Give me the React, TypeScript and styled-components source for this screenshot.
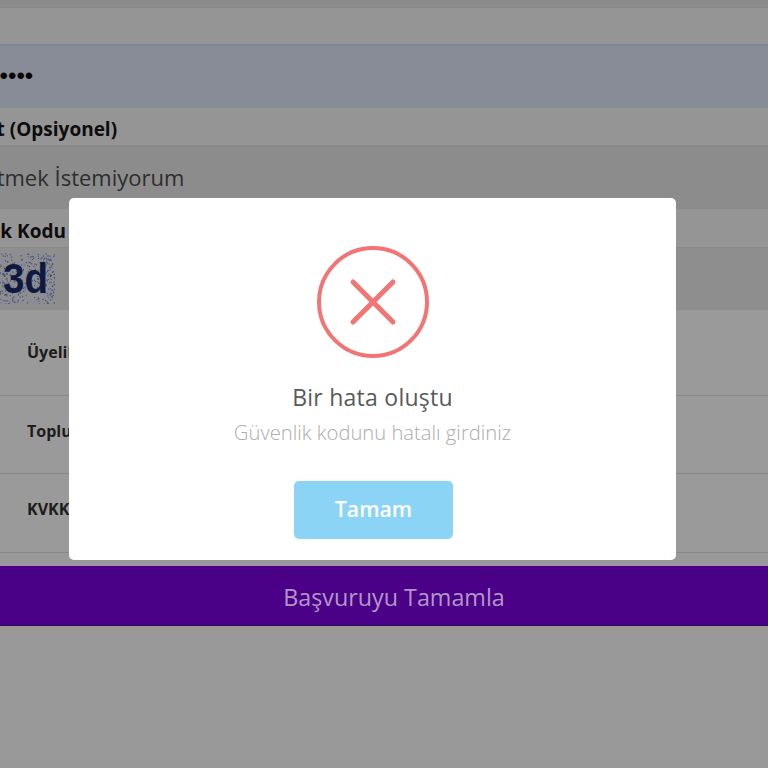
import React, { useMemo } from "react";
import styled, { createGlobalStyle } from "styled-components";

const Global = createGlobalStyle`
  html, body { margin: 0; padding: 0; width: 768px; height: 768px; overflow: hidden; background: #999999; }
  body { font-family: "Open Sans", "Noto Sans", sans-serif; }
`;

const Viewport = styled.div`
  width: 768px;
  height: 768px;
  overflow: hidden;
  background: #999999;
`;

/* The page underneath is scrolled sideways, so its left edge falls outside the window. */
const Page = styled.main`
  width: 948px;
  margin-left: -80px;
  display: flex;
  flex-direction: column;
`;

const TopBand = styled.div`
  height: 7px;
  background: #8b8b8b;
  border-bottom: 1px solid #868686;
`;

const LabelRow = styled.div<{ $h: number; $indent: number }>`
  height: ${(p) => p.$h}px;
  box-sizing: border-box;
  padding: 5px 0 0 ${(p) => p.$indent}px;
  display: flex;
  align-items: center;
  background: #959595;
  color: #0c0c0c;
  font-size: 19px;
  font-weight: 700;
  white-space: nowrap;
`;

const Field = styled.div<{ $h: number; $bg: string; $line: string; $indent: number }>`
  height: ${(p) => p.$h}px;
  padding: 0 0 2px ${(p) => p.$indent}px;
  box-sizing: border-box;
  display: flex;
  align-items: center;
  background: ${(p) => p.$bg};
  border-top: 2px solid ${(p) => p.$line};
  color: #2e2e2e;
  font-size: 22px;
  white-space: nowrap;
`;

const Dots = styled.span`
  color: #060606;
  font-size: 24px;
  font-family: "Liberation Sans", sans-serif;
`;

const CaptchaRow = styled.div`
  height: 63px;
  box-sizing: border-box;
  padding: 5px 0 0 50px;
  background: #8e8e8e;
  border-top: 1px solid #898989;
`;

const Captcha = styled.svg`
  display: block;
  width: 85px;
  height: 51px;
`;

const CaptchaText = styled.text`
  font-family: "Liberation Sans", sans-serif;
  font-weight: 700;
  font-size: 35px;
  fill: #0f1940;
`;

const ConsentRow = styled.div<{ $h: number; $lift: number }>`
  height: ${(p) => p.$h}px;
  box-sizing: border-box;
  padding: 0 0 ${(p) => p.$lift}px 107px;
  display: flex;
  align-items: center;
  background: #9a9a9a;
  border-bottom: 1px solid #878787;
  color: #1c1c1c;
  font-size: 16px;
  font-weight: 700;
  white-space: nowrap;
`;

const Submit = styled.div`
  margin-top: 12px;
  height: 61px;
  box-sizing: border-box;
  padding-top: 2px;
  display: flex;
  align-items: center;
  justify-content: center;
  background: #4b0088;
  border-top: 1px solid #a98fb0;
  border-bottom: 1px solid #2d0a52;
  color: #b297c6;
  font-size: 23.3px;
`;

const Modal = styled.div`
  position: fixed;
  left: 69px;
  top: 198px;
  width: 607px;
  height: 362px;
  box-sizing: border-box;
  padding-top: 48px;
  display: flex;
  flex-direction: column;
  align-items: center;
  background: #ffffff;
  border-radius: 5px;
`;

const ErrorIcon = styled.svg`
  display: block;
  width: 112px;
  height: 112px;
`;

const Title = styled.h2`
  margin: 24px 0 0;
  height: 30px;
  line-height: 30px;
  color: #595959;
  font-size: 23px;
  font-weight: 500;
  letter-spacing: 0.25px;
`;

const Message = styled.p`
  margin: 7px 0 0;
  height: 26px;
  line-height: 26px;
  color: #adadad;
  font-size: 20.2px;
  font-weight: 300;
`;

const OkButton = styled.button`
  margin: 36px 0 0 2px;
  width: 159px;
  height: 58px;
  padding: 0 0 4px;
  border: 0;
  border-radius: 5px;
  background: #8cd4f5;
  color: #ffffff;
  font-family: inherit;
  font-size: 21.3px;
  font-weight: 600;
`;

function CaptchaImage() {
  const dots = useMemo(() => {
    let seed = 17;
    const rand = () => {
      seed = (seed * 16807) % 2147483647;
      return seed / 2147483647;
    };
    return Array.from({ length: 1100 }, () => ({
      x: rand() * 85,
      y: rand() * 51,
      dark: rand() > 0.62,
    }));
  }, []);
  return (
    <Captcha viewBox="0 0 85 51" aria-label="Güvenlik kodu">
      {dots.map((d, i) => (
        <rect
          key={i}
          x={d.x}
          y={d.y}
          width="1.1"
          height="1.1"
          fill={d.dark ? "#3c4568" : "#818baa"}
        />
      ))}
      <CaptchaText transform="translate(33 40) scale(1.1 1.2)">3d</CaptchaText>
    </Captcha>
  );
}

export default function App() {
  return (
    <Viewport>
      <Global />
      <Page>
        <TopBand />
        <LabelRow $h={36} $indent={0} />
        <Field $h={64} $bg="#878c96" $line="#83868e" $indent={4}>
          <Dots>•••••••••••••</Dots>
        </Field>
        <LabelRow $h={37} $indent={29}>
          Davet (Opsiyonel)
        </LabelRow>
        <Field $h={64} $bg="#8c8c8c" $line="#878787" $indent={30}>
          Belirtmek İstemiyorum
        </Field>
        <LabelRow $h={38} $indent={8}>
          Güvenlik Kodu
        </LabelRow>
        <CaptchaRow>
          <CaptchaImage />
        </CaptchaRow>
        <ConsentRow $h={86} $lift={2}>Üyelik Sözleşmesi</ConsentRow>
        <ConsentRow $h={78} $lift={8}>Toplu İleti Onayı</ConsentRow>
        <ConsentRow $h={79} $lift={8}>KVKK Aydınlatma Metni</ConsentRow>
        <Submit>Başvuruyu Tamamla</Submit>
      </Page>
      <Modal role="dialog">
        <ErrorIcon viewBox="0 0 112 112">
          <circle cx="56" cy="56" r="54" fill="none" stroke="#f27474" strokeWidth="4" />
          <path
            d="M36 36 L76 76 M76 36 L36 76"
            fill="none"
            stroke="#f27474"
            strokeWidth="5"
            strokeLinecap="round"
          />
        </ErrorIcon>
        <Title>Bir hata oluştu</Title>
        <Message>Güvenlik kodunu hatalı girdiniz</Message>
        <OkButton>Tamam</OkButton>
      </Modal>
    </Viewport>
  );
}
